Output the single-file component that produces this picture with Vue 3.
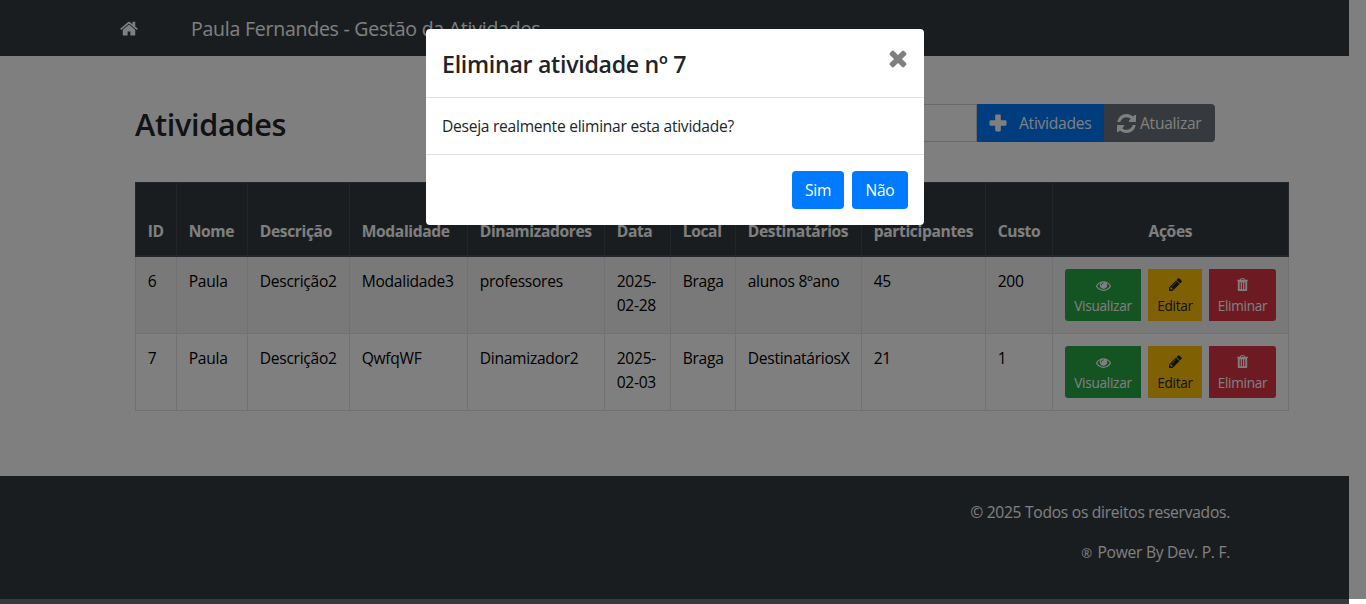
<script setup>
const columns = [
  { label: 'ID', width: 41 },
  { label: 'Nome', width: 71 },
  { label: 'Descrição', width: 102 },
  { label: 'Modalidade', width: 118 },
  { label: 'Dinamizadores', width: 137 },
  { label: 'Data', width: 66 },
  { label: 'Local', width: 65 },
  { label: 'Destinatários', width: 126 },
  { label: 'participantes', width: 124 },
  { label: 'Custo', width: 67 },
  { label: 'Ações', width: 236 }
]
const rows = [
  ['6', 'Paula', 'Descrição2', 'Modalidade3', 'professores', '2025-02-28', 'Braga', 'alunos 8ºano', '45', '200'],
  ['7', 'Paula', 'Descrição2', 'QwfqWF', 'Dinamizador2', '2025-02-03', 'Braga', 'DestinatáriosX', '21', '1']
]
</script>

<template>
  <div class="page">
    <nav class="navbar">
      <svg class="home" viewBox="0 0 1664 1312"><path d="M1408 768v480q0 26-19 45t-45 19H960V928H704v384H320q-26 0-45-19t-19-45V768q0-1 .5-3t.5-3l575-474 575 474q1 2 1 6zm223-69-62 74q-8 9-21 11h-3q-13 0-21-7L832 200 140 777q-12 8-24 7-13-2-21-11l-62-74q-8-10-7-23.500T37 654L756 55q32-26 76-26t76 26l244 204V64q0-14 9-23t23-9h192q14 0 23 9t9 23v408l219 182q10 8 11 21.500t-7 23.500z"/></svg>
      <span class="brand">Paula Fernandes - Gestão da Atividades</span>
    </nav>

    <main>
      <div class="toolbar">
        <h2>Atividades</h2>
        <div class="group">
          <div class="search"></div>
          <button class="tool add"><svg class="plus" viewBox="0 0 18 18"><path d="M7.500.5h3q1.300 0 1.300 1.300v4.400h4.400q1.300 0 1.300 1.300v3q0 1.300-1.300 1.300h-4.400v4.400q0 1.300-1.300 1.300h-3q-1.300 0-1.300-1.300v-4.400H1.800Q.5 11.800.5 10.500v-3q0-1.300 1.300-1.300h4.400V1.800Q6.200.5 7.500.5z"/></svg><span>Atividades</span></button>
          <button class="tool refresh"><svg class="sync" viewBox="0 0 1536 1536"><path d="M1511 928q0 5-1 7-64 268-268 434.500T764 1536q-146 0-282.500-55T238 1324l-129 129q-19 19-45 19t-45-19-19-45V960q0-26 19-45t45-19h448q26 0 45 19t19 45-19 45l-137 137q71 66 161 102t187 36q134 0 250-65t186-179q11-17 53-117 8-23 30-23h192q13 0 22.500 9.500t9.500 22.500zm25-800v448q0 26-19 45t-45 19h-448q-26 0-45-19t-19-45 19-45l138-138Q969 256 768 256q-134 0-250 65T332 500q-11 17-53 117-8 23-30 23H50q-13 0-22.500-9.500T18 608v-7q65-268 270-434.500T768 0q146 0 284 55.500T1297 212l130-129q19-19 45-19t45 19 19 45z"/></svg><span>Atualizar</span></button>
        </div>
      </div>

      <table>
        <colgroup><col v-for="c in columns" :key="c.label" :style="{ width: c.width + 'px' }"></colgroup>
        <thead>
          <tr><th v-for="c in columns" :key="c.label">{{ c.label }}</th></tr>
        </thead>
        <tbody>
          <tr v-for="row in rows" :key="row[0]">
            <td v-for="(cell, i) in row" :key="i">{{ cell }}</td>
            <td>
              <div class="actions">
                <button class="act view"><svg width="15" height="14" viewBox="0 0 1792 1664"><path d="M1664 960Q1512 724 1283 607q61 104 61 225 0 185-131.500 316.500T896 1280t-316.500-131.500T448 832q0-121 61-225-229 117-381 353 133 205 333.500 326.500T896 1408t434.500-121.500T1664 960zM944 576q0-20-14-34t-34-14q-125 0-214.500 89.500T592 832q0 20 14 34t34 14 34-14 14-34q0-86 61-147t147-61q20 0 34-14t14-34zm848 384q0 34-20 69-140 230-376.500 368.500T896 1536t-499.500-139T20 1029Q0 994 0 960t20-69q140-229 376.500-368T896 384t499.500 139T1772 891q20 35 20 69z"/></svg><span>Visualizar</span></button>
                <button class="act edit"><svg width="13" height="14" viewBox="0 0 1536 1664"><path d="M363 1408l91-91-235-235-91 91v107h128v128h107zm523-928q0-22-22-22-10 0-17 7l-542 542q-7 7-7 17 0 22 22 22 10 0 17-7l542-542q7-7 7-17zm-54-192l416 416-832 832H0v-416l832-832zm683 96q0 53-37 90l-166 166-416-416 166-165q36-38 90-38 53 0 91 38l235 234q37 39 37 91z"/></svg><span>Editar</span></button>
                <button class="act del"><svg width="11" height="14" viewBox="0 0 11 14"><path fill-rule="evenodd" d="M3 1.700 3.400.700 4 .300h3l.600.400.4 1H11v1h-.800v9.500q0 .8-.8.8H1.600q-.8 0-.8-.8V2.700H0v-1zM4 1.700h3l-.3-.6H4.300zM2.700 4.200v7.100h1V4.200zm2.300 0v7.100h1V4.200zm2.300 0v7.100h1V4.200z"/></svg><span>Eliminar</span></button>
              </div>
            </td>
          </tr>
        </tbody>
      </table>
    </main>

    <footer>
      <p>© 2025 Todos os direitos reservados.</p>
      <p class="power"><span class="reg">®</span> Power By Dev. P. F.</p>
    </footer>

    <div class="backdrop"></div>
    <section class="modal" role="dialog">
      <header>
        <h4>Eliminar atividade nº 7</h4>
        <svg class="close" viewBox="0 0 18 18"><path d="M4.900.9 9 5 13.100.9q1-.9 2 0l2 2q.9 1 0 2L13 9l4.100 4.100q.9 1 0 2l-2 2q-1 .9-2 0L9 13l-4.100 4.100q-1 .9-2 0l-2-2q-.9-1 0-2L5 9 .9 4.900q-.9-1 0-2l2-2q1-.9 2 0z"/></svg>
      </header>
      <div class="body">Deseja realmente eliminar esta atividade?</div>
      <div class="foot"><button class="yes">Sim</button><button class="no">Não</button></div>
    </section>
  </div>
</template>

<style>
body { margin: 0; background: #fff; overflow: hidden; }
</style>

<style scoped>
* { box-sizing: border-box; }
.page { position: relative; width: 1366px; height: 604px; overflow: hidden; font: 15.6px/24px "Open Sans", "Noto Sans", sans-serif; letter-spacing: -.27px; color: #212529; background: #fff; }
svg { display: block; fill: currentColor; flex: none; }
button { border: 0; margin: 0; font: inherit; letter-spacing: inherit; color: #fff; white-space: nowrap; }
.navbar { width: 1349px; height: 56px; background: #343a40; color: #fff; display: flex; align-items: center; padding-left: 120px; }
.home { width: 18px; height: 15px; }
.brand { margin-left: 53px; font-size: 19.500px; line-height: 30px; letter-spacing: -.24px; white-space: nowrap; padding-top: 2px; }
main { height: 420px; padding: 48px 0 0 135px; }
.toolbar { width: 1080px; height: 38px; margin-bottom: 40px; display: flex; justify-content: space-between; align-items: center; }
h2 { margin: 2px 0 0; font-size: 30.600px; line-height: 38px; font-weight: 600; letter-spacing: -.3px; }
.group { display: flex; height: 38px; }
.search { width: 200px; border: 1px solid #ced4da; border-radius: 4px 0 0 4px; }
.tool { display: flex; align-items: center; padding: 0; }
.add { width: 127px; background: #007bff; padding-left: 12px; }
.plus { width: 18px; height: 18px; margin-right: 12px; }
.refresh { width: 111px; background: #6c757d; border-radius: 0 4px 4px 0; padding-left: 13px; }
.sync { width: 19px; height: 19px; margin-right: 4px; }
table { width: 1154px; table-layout: fixed; border-collapse: collapse; color: #000; }
th, td { padding: 12px 12px 12px 11.700px; border: 1px solid #dee2e6; vertical-align: top; text-align: left; }
td:last-child { padding-left: 12px; }
thead tr { height: 73.500px; }
th { background: #343a40; color: #fff; border-color: #454d55; border-bottom-width: 2px; vertical-align: bottom; font-weight: 700; letter-spacing: -.35px; }
th:last-child { text-align: center; }
tbody tr { height: 77px; }
tbody tr:nth-child(odd) { background: #f2f2f2; }
.actions { display: flex; gap: 7px; }
.act { height: 52px; padding: 5px 0; font-size: 13.600px; line-height: 21px; display: flex; flex-direction: column; align-items: center; }
.act svg { margin: 4px 0 3px; }
.view { width: 76px; background: #28a745; border-radius: 3px 0 0 3px; }
.edit { width: 54px; background: #ffc107; color: #212529; }
.del { width: 67px; background: #dc3545; border-radius: 0 3px 3px 0; }
footer { width: 1349px; height: 128px; background: #343a40; color: #fff; padding: 24px 119px 0 0; text-align: right; }
footer p { margin: 0 0 16px; }
.reg { font-size: 13px; margin-right: 2px; }
.backdrop { position: absolute; left: 0; top: 0; width: 1366px; height: 599px; background: rgba(0, 0, 0, .5); }
.modal { position: absolute; left: 426px; top: 29px; width: 498px; height: 196px; background: #fff; border-radius: 4px; }
.modal header { height: 69px; padding: 16px; border-bottom: 1px solid #dee2e6; display: flex; justify-content: space-between; }
h4 { margin: 1px 0 0; font-size: 23.200px; line-height: 36px; font-weight: 600; letter-spacing: -.3px; }
.close { width: 18px; height: 18px; color: #808080; margin: 5px 1px 0 0; }
.body { height: 57px; padding: 16px; border-bottom: 1px solid #dee2e6; }
.foot { padding: 16px; display: flex; justify-content: flex-end; gap: 8px; }
.foot button { height: 38px; padding: 0; border-radius: 4px; background: #007bff; }
.yes { width: 52px; }
.no { width: 56px; }
</style>
